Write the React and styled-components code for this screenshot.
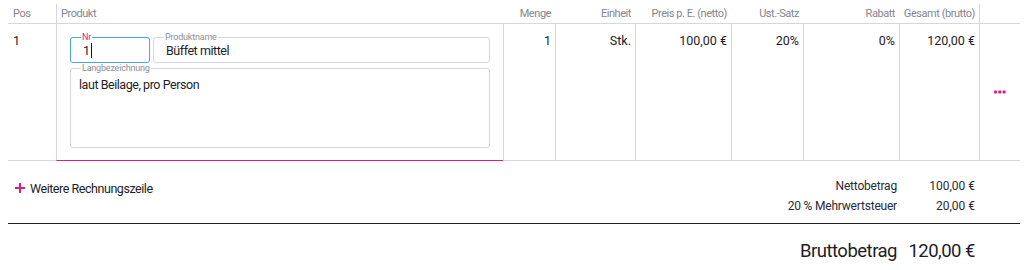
import React from "react";
import styled, { createGlobalStyle } from "styled-components";

const PINK = "#e3197f";
const LINE = "#d6d6df";
const TEXT = "#1d1d28";
const MUTED = "#858590";

const Global = createGlobalStyle`
  html, body { margin: 0; padding: 0; background: #fff; }
  body {
    font-family: Roboto, "Liberation Sans", sans-serif;
    color: ${TEXT};
    -webkit-font-smoothing: antialiased;
  }
  * { box-sizing: border-box; }
`;

const COLS = "48px 447px 52px 80px 96px 72px 96px 80px 41px";

const Page = styled.div`
  width: 1028px;
  padding: 0 8px;
`;

const HeaderRow = styled.div`
  display: grid;
  grid-template-columns: ${COLS};
  height: 24px;
  border-bottom: 1px solid ${LINE};
`;

const HeadCell = styled.div`
  margin-top: 4px;
  height: 19px;
  display: flex;
  align-items: center;
  justify-content: ${(p) => (p.$right ? "flex-end" : "flex-start")};
  padding: 0 ${(p) => (p.$right ? "4px" : "0")} 0 ${(p) => (p.$first ? "5px" : p.$right ? "0" : "4px")};
  border-left: ${(p) => (p.$line ? `1px solid ${LINE}` : "none")};
  font-size: 11px;
  color: ${MUTED};
  white-space: nowrap;
  letter-spacing: -0.45px;
`;

const BodyRow = styled.div`
  display: grid;
  grid-template-columns: ${COLS};
  height: 137px;
`;

const Cell = styled.div`
  border-left: ${(p) => (p.$line ? `1px solid ${LINE}` : "none")};
  border-bottom: 1px solid ${(p) => (p.$accent ? PINK : LINE)};
  padding: 9px ${(p) => (p.$right ? "4px" : "0")} 0 ${(p) => (p.$right ? "0" : "5px")};
  text-align: ${(p) => (p.$right ? "right" : "left")};
  font-size: 12.5px;
  line-height: 16px;
  white-space: nowrap;
`;

const ProductCell = styled(Cell)`
  padding: 13px 13px 12px 13px;
  display: flex;
  flex-direction: column;
  gap: 5px;
`;

const FieldLine = styled.div`
  display: flex;
  gap: 3px;
`;

const Field = styled.div`
  position: relative;
  width: ${(p) => p.$width || "auto"};
  flex: ${(p) => (p.$width ? "none" : "1")};
  height: ${(p) => p.$height || "26px"};
  border: 1px solid ${(p) => (p.$focus ? "#49a9d8" : LINE)};
  border-radius: 3px;
  padding: ${(p) => p.$pad || "5px 0 0 12px"};
  font-size: 12.5px;
  letter-spacing: -0.45px;
  line-height: 15px;
  color: ${TEXT};
`;

const FieldLabel = styled.span`
  position: absolute;
  top: -6px;
  left: 10px;
  padding: 0 1px;
  background: #fff;
  font-size: 9px;
  line-height: 10px;
  letter-spacing: -0.2px;
  color: ${(p) => (p.$focus ? PINK : "#8e8e98")};
`;

const Caret = styled.span`
  display: inline-block;
  width: 1px;
  height: 15px;
  background: #111;
  vertical-align: -3px;
  margin-left: 1px;
`;

const ActionCell = styled(Cell)`
  display: flex;
  align-items: center;
  justify-content: center;
  padding: 0;
`;

const Footer = styled.div`
  display: flex;
  justify-content: space-between;
  align-items: flex-start;
  padding: 15px 45px 7px 7px;
`;

const AddButton = styled.button`
  margin-top: 2px;
  display: flex;
  align-items: center;
  gap: 5px;
  height: 20px;
  padding: 0;
  border: none;
  background: none;
  font-family: inherit;
  font-size: 12.5px;
  letter-spacing: -0.45px;
  color: ${TEXT};
  cursor: pointer;
`;

const Totals = styled.div`
  display: grid;
  grid-template-columns: auto 78px;
  grid-auto-rows: 20px;
  align-items: center;
  font-size: 12px;
  color: #2a2a36;
`;

const TotalLabel = styled.div`
  text-align: right;
  letter-spacing: -0.2px;
`;

const TotalValue = styled.div`
  text-align: right;
`;

const Divider = styled.div`
  height: 1px;
  background: #222;
`;

const Gross = styled.div`
  display: flex;
  justify-content: flex-end;
  padding: 15px 45px 0 0;
  font-size: 18.5px;
  line-height: 24px;
  letter-spacing: -0.5px;
  color: #1d1d28;
`;

const GrossValue = styled.div`
  width: 78px;
  text-align: right;
`;

function Dots() {
  return (
    <svg width="12" height="4" viewBox="0 0 12 4">
      {[0, 4.3, 8.6].map((x) => (
        <rect key={x} x={x} y="0.5" width="3" height="3" rx="0.8" fill={PINK} />
      ))}
    </svg>
  );
}

function Plus() {
  return (
    <svg width="10" height="10" viewBox="0 0 10 10">
      <path d="M5 0V10M0 5H10" stroke={PINK} strokeWidth="2" />
    </svg>
  );
}

export default function App() {
  return (
    <>
      <Global />
      <Page>
        <HeaderRow>
          <HeadCell $first>Pos</HeadCell>
          <HeadCell $line>Produkt</HeadCell>
          <HeadCell $right>Menge</HeadCell>
          <HeadCell $right>Einheit</HeadCell>
          <HeadCell $right>Preis p. E. (netto)</HeadCell>
          <HeadCell $right>Ust.-Satz</HeadCell>
          <HeadCell $right>Rabatt</HeadCell>
          <HeadCell $right>Gesamt (brutto)</HeadCell>
          <HeadCell $line />
        </HeaderRow>
        <BodyRow>
          <Cell>1</Cell>
          <ProductCell $line $accent>
            <FieldLine>
              <Field $width="80px" $focus>
                <FieldLabel $focus>Nr</FieldLabel>
                1<Caret />
              </Field>
              <Field>
                <FieldLabel>Produktname</FieldLabel>
                Büffet mittel
              </Field>
            </FieldLine>
            <Field $height="80px" $pad="8px 0 0 8px">
              <FieldLabel>Langbezeichnung</FieldLabel>
              laut Beilage, pro Person
            </Field>
          </ProductCell>
          <Cell $line $right>1</Cell>
          <Cell $line $right>Stk.</Cell>
          <Cell $line $right>100,00 €</Cell>
          <Cell $line $right>20%</Cell>
          <Cell $line $right>0%</Cell>
          <Cell $line $right>120,00 €</Cell>
          <ActionCell $line>
            <Dots />
          </ActionCell>
        </BodyRow>
        <Footer>
          <AddButton>
            <Plus />
            Weitere Rechnungszeile
          </AddButton>
          <Totals>
            <TotalLabel>Nettobetrag</TotalLabel>
            <TotalValue>100,00 €</TotalValue>
            <TotalLabel>20 % Mehrwertsteuer</TotalLabel>
            <TotalValue>20,00 €</TotalValue>
          </Totals>
        </Footer>
        <Divider />
        <Gross>
          <div>Bruttobetrag</div>
          <GrossValue>120,00 €</GrossValue>
        </Gross>
      </Page>
    </>
  );
}
